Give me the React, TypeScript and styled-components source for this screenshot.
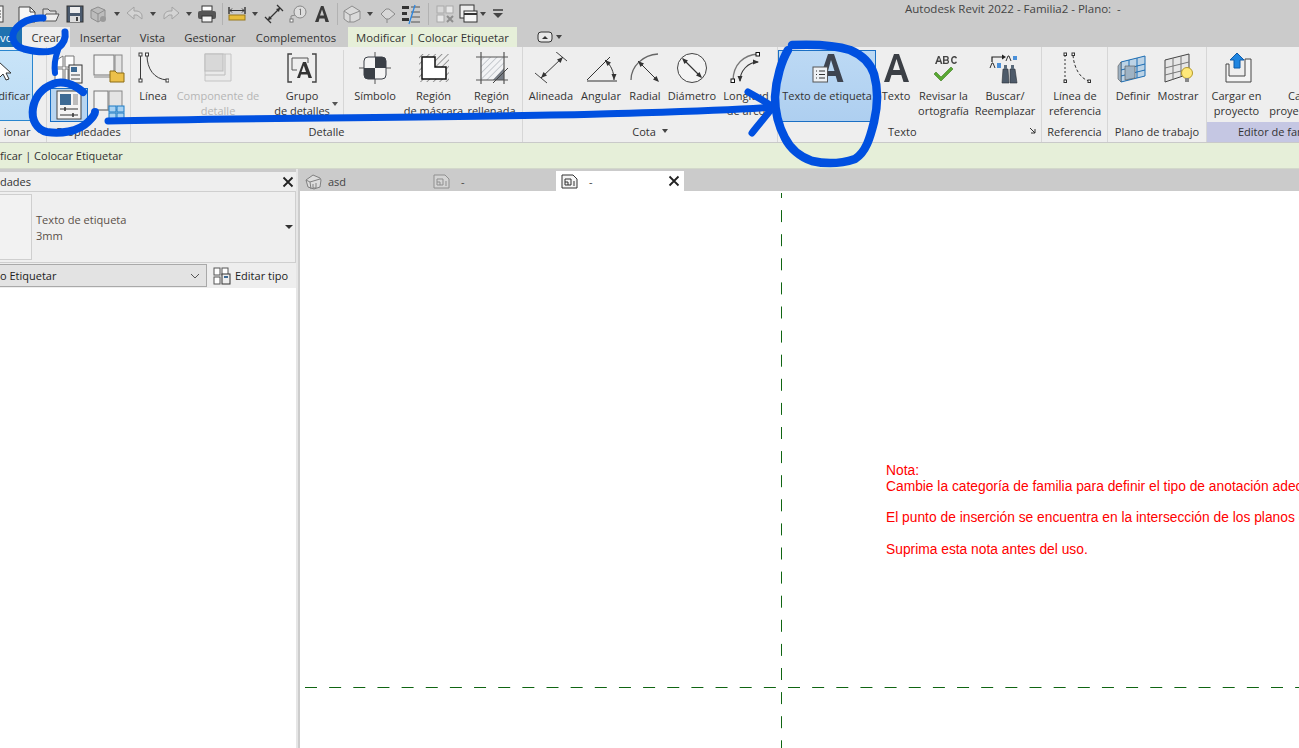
import React from 'react';
import styled, { createGlobalStyle } from 'styled-components';

const GlobalStyle = createGlobalStyle`
  html, body { margin: 0; padding: 0; height: 100%; overflow: hidden; background: #cbcbcb; }
  #root { height: 100%; }
  * { box-sizing: border-box; }
`;

const uiFont = `'Open Sans', 'Noto Sans', 'Liberation Sans', sans-serif`;

const Page = styled.div`
  position: relative;
  width: 1299px;
  height: 748px;
  overflow: hidden;
  font-family: ${uiFont};
  font-size: 11px;
  color: #333;
  display: flex;
  flex-direction: column;
`;

/* title bar */
const TitleBar = styled.div`
  height: 27px;
  flex: none;
  display: flex;
  align-items: center;
  background: #cbcbcb;
`;
const QuickBar = styled.div`
  display: flex;
  align-items: center;
  margin-left: -25px;
  width: 930px;
`;
const QuickCell = styled.span<{ $w: number }>`
  width: ${p => p.$w}px;
  height: 24px;
  flex: none;
  display: flex;
  align-items: center;
  justify-content: center;
`;
const QuickSep = styled.span`
  width: 1px;
  height: 22px;
  background: #b2b2b2;
`;
const Caret = styled.span`
  width: 0;
  height: 0;
  border-left: 3.5px solid transparent;
  border-right: 3.5px solid transparent;
  border-top: 4px solid #444;
`;
const TitleText = styled.div`
  font-size: 11.5px;
  color: #444;
  white-space: pre;
  margin-top: -10px;
`;

/* tabs */
const TabRow = styled.div`
  height: 20px;
  flex: none;
  display: flex;
  background: #cbcbcb;
`;
const Tab = styled.div<{ $w: number; $kind?: 'file' | 'open' | 'context' }>`
  width: ${p => p.$w}px;
  flex: none;
  display: flex;
  align-items: center;
  justify-content: ${p => (p.$kind === 'file' ? 'flex-start' : 'center')};
  white-space: nowrap;
  font-size: 11.3px;
  color: ${p => (p.$kind === 'file' ? '#fff' : '#333')};
  background: ${p =>
    p.$kind === 'file' ? '#1f72b0' : p.$kind === 'open' ? '#eeeeee' : p.$kind === 'context' ? '#e6efd9' : 'transparent'};
`;
const TabGap = styled.div`
  width: 2px;
  flex: none;
`;
const PanelToggle = styled.div`
  margin-left: 20px;
  display: flex;
  align-items: center;
  gap: 3px;
`;

/* ribbon */
const Ribbon = styled.div`
  height: 96px;
  flex: none;
  display: flex;
  background: #eeeeee;
  border-bottom: 1px solid #c9c9c9;
`;
const Panel = styled.section<{ $w: number }>`
  width: ${p => p.$w}px;
  flex: none;
  display: flex;
  flex-direction: column;
  border-right: 1px solid #d6d6d6;
`;
const PanelBody = styled.div<{ $pad?: number }>`
  height: 75px;
  display: flex;
  padding-left: ${p => p.$pad ?? 0}px;
`;
const PanelTitle = styled.div<{ $accent?: boolean; $indent?: number }>`
  height: 20px;
  display: flex;
  align-items: center;
  justify-content: ${p => (p.$indent !== undefined ? 'flex-start' : 'center')};
  gap: 6px;
  white-space: nowrap;
  font-size: 11px;
  padding-left: ${p => p.$indent ?? 0}px;
  padding-bottom: 2px;
  background: ${p => (p.$accent ? '#c5c7e3' : 'transparent')};
`;
const CornerArrow = styled.svg`
  margin-left: auto;
  margin-right: 4px;
`;
const ToolButton = styled.div<{ $w: number; $selected?: boolean; $disabled?: boolean }>`
  position: relative;
  width: ${p => p.$w}px;
  flex: none;
  display: flex;
  flex-direction: column;
  align-items: center;
  padding-top: ${p => (p.$selected ? 0 : 5)}px;
  margin-top: ${p => (p.$selected ? 3 : 0)}px;
  height: ${p => (p.$selected ? 72 : 75)}px;
  border: ${p => (p.$selected ? '1px solid #1a6fc4' : 'none')};
  background: ${p => (p.$selected ? 'linear-gradient(#bcd9f4, #aecff0)' : 'transparent')};
  color: ${p => (p.$disabled ? '#b5b5b5' : '#333')};
`;
const ToolLabel = styled.div`
  margin-top: 4px;
  font-size: 11px;
  line-height: 15px;
  text-align: center;
  white-space: pre;
`;
const SplitCaret = styled(Caret)`
  position: absolute;
  right: 5px;
  top: 55px;
  border-top-color: #555;
`;
const ModifyButton = styled.div`
  width: 57px;
  height: 71px;
  margin-left: -24px;
  margin-top: 3px;
  flex: none;
  display: flex;
  flex-direction: column;
  align-items: flex-end;
  border: 1px solid #2a86cf;
  background: linear-gradient(#c9e4f8, #bcdcf5);
  padding: 8px 2px 0 0;
`;
const ModifyArrow = styled.span`
  display: flex;
  margin-right: 9px;
`;
const ModifyLabel = styled(ToolLabel)`
  margin-top: 5px;
`;
const PropsGrid = styled.div`
  display: grid;
  grid-template-columns: 40px 40px;
  grid-template-rows: 37px 35px;
  padding: 3px 0 0 2px;
  align-items: center;
  justify-items: center;
`;
const PropsCell = styled.div<{ $selected?: boolean }>`
  width: ${p => (p.$selected ? 38 : 32)}px;
  height: ${p => (p.$selected ? 34 : 32)}px;
  display: flex;
  align-items: center;
  justify-content: center;
  border: ${p => (p.$selected ? '1px solid #1a6fc4' : 'none')};
  background: ${p => (p.$selected ? '#b7d5f1' : 'transparent')};
`;
const InnerRule = styled.div`
  width: 1px;
  height: 68px;
  flex: none;
  margin-top: 3px;
  background: #d6d6d6;
`;

/* options bar */
const OptionsBar = styled.div`
  height: 26px;
  flex: none;
  background: #e6efd9;
  border-bottom: 1px solid #d3d8cb;
  display: flex;
  align-items: center;
  font-size: 11px;
`;

/* workspace */
const Workspace = styled.div`
  flex: 1;
  min-height: 0;
  display: flex;
`;
const Properties = styled.aside`
  width: 296px;
  flex: none;
  display: flex;
  flex-direction: column;
  margin-top: 3px;
  background: #fff;
`;
const PropsHeader = styled.div`
  height: 19px;
  flex: none;
  background: #eeeeee;
  display: flex;
  align-items: center;
  justify-content: space-between;
  padding-right: 2px;
  font-size: 11px;
`;
const TypeSelector = styled.div`
  height: 72px;
  flex: none;
  display: flex;
  align-items: center;
  background: #efefef;
  border: 1px solid #cfcfcf;
  border-left: none;
`;
const TypePreview = styled.div`
  width: 32px;
  height: 66px;
  flex: none;
  background: #f2f2f2;
  border: 1px solid #cfcfcf;
  border-left: none;
`;
const TypeText = styled.div`
  flex: 1;
  margin-left: 4px;
  padding-top: 2px;
  line-height: 16px;
  font-size: 11.1px;
  color: #5a5048;
`;
const TypeArrow = styled(Caret)`
  margin-right: 2px;
  border-top-color: #333;
  border-left-width: 4px;
  border-right-width: 4px;
`;
const TypeRow = styled.div`
  height: 25px;
  flex: none;
  background: #eeeeee;
  display: flex;
  align-items: center;
`;
const Combo = styled.div`
  width: 207px;
  height: 23px;
  flex: none;
  display: flex;
  align-items: center;
  justify-content: space-between;
  padding-right: 6px;
  background: #e3e3e3;
  border: 1px solid #a9a9a9;
  border-left: none;
  font-size: 11px;
  color: #222;
`;
const EditType = styled.div`
  margin-left: 6px;
  display: flex;
  align-items: center;
  gap: 4px;
  font-size: 11px;
  color: #222;
`;
const Splitter = styled.div`
  width: 4px;
  flex: none;
  background: linear-gradient(90deg, #e6e6e6 50%, #cdcdcd 50%);
`;
const DocArea = styled.div`
  flex: 1;
  min-width: 0;
  display: flex;
  flex-direction: column;
`;
const DocTabs = styled.div`
  height: 22px;
  flex: none;
  display: flex;
  align-items: flex-end;
  background: #cbcbcb;
`;
const DocTab = styled.div<{ $w: number; $gap: number; $active?: boolean }>`
  width: ${p => p.$w}px;
  height: 20px;
  flex: none;
  display: flex;
  align-items: center;
  gap: ${p => p.$gap}px;
  padding-left: 5px;
  padding-right: 4px;
  font-size: 11px;
  color: #444;
  background: ${p => (p.$active ? '#fff' : 'transparent')};
`;
const DocClose = styled.span`
  margin-left: auto;
  display: flex;
`;
const Canvas = styled.main`
  flex: 1;
  position: relative;
  background: #fff;
  overflow: hidden;
`;
const RefLines = styled.svg`
  position: absolute;
  inset: 0;
`;
const Note = styled.div`
  position: absolute;
  left: 586px;
  top: 272px;
  font-family: 'Liberation Sans', Arial, sans-serif;
  font-size: 13.8px;
  line-height: 15.8px;
  color: #ff0000;
  white-space: nowrap;
`;
const Annotation = styled.svg`
  position: absolute;
  left: 0;
  top: 0;
  pointer-events: none;
`;

type S = { s?: number };
const Ic = ({ s = 32, vb = 32, children }: S & { vb?: number; children: React.ReactNode }) => (
  <svg width={s} height={s} viewBox={`0 0 ${vb} ${vb}`} fill="none">
    {children}
  </svg>
);

/* quick access icons */
const pale = '#a3a3a3';
const QList = () => <Ic s={20} vb={20}><rect x="2" y="2" width="16" height="16" fill="#f4f4f4" stroke="#444" /><path d="M6 7h10M6 10h10M6 13h10" stroke="#444" /></Ic>;
const QNew = () => <Ic s={20} vb={20}><path d="M2 3h11l5 5v10H2z" fill="#f6f6f6" stroke="#444" /><path d="M13 3v5h5" stroke="#444" /></Ic>;
const QOpen = () => <Ic s={20} vb={20}><path d="M2 17V5h5l2 2h6v3" fill="#ddd" stroke="#555" /><path d="M2 17l3-7h13l-3 7z" fill="#eee" stroke="#555" /></Ic>;
const QSave = () => <Ic s={20} vb={20}><rect x="2" y="2" width="16" height="16" fill="#4a5a6e" stroke="#333" /><rect x="5" y="3" width="10" height="6" fill="#eee" /><rect x="5" y="12" width="10" height="6" fill="#ddd" /><rect x="11" y="13" width="2" height="4" fill="#444" /></Ic>;
const QBox = () => <Ic s={20} vb={20}><path d="M3 6l7-3 7 3v8l-7 4-7-4z" fill="#bcbcbc" stroke="#8d8d8d" /><path d="M3 6l7 4 7-4M10 10v8" stroke="#8d8d8d" /><circle cx="15" cy="15" r="3" fill="#9a9a9a" /></Ic>;
const QUndo = () => <Ic s={20} vb={20}><path d="M9 3L2 9l7 6v-4h3l5 4v-3c0-3-3-5-6-5H9z" fill="#d4d4d4" stroke={pale} /></Ic>;
const QRedo = () => <Ic s={20} vb={20}><path d="M11 3l7 6-7 6v-4H8l-5 4v-3c0-3 3-5 6-5h2z" fill="#d4d4d4" stroke={pale} /></Ic>;
const QPrint = () => <Ic s={20} vb={20}><rect x="5" y="2" width="10" height="5" fill="#fff" stroke="#333" /><rect x="1" y="7" width="18" height="8" rx="2" fill="#555" /><rect x="5" y="12" width="10" height="6" fill="#f4f4f4" stroke="#333" /></Ic>;
const QMeasure = () => <Ic s={20} vb={20}><path d="M2 3v7M18 3v7" stroke="#333" strokeWidth="1.4" /><path d="M3 6.500h14M5 4.500l-2 2 2 2M15 4.500l2 2-2 2" stroke="#333" /><rect x="2" y="11" width="16" height="5" fill="#e8bd3a" stroke="#9a7a1c" /></Ic>;
const QAlign = () => <Ic s={20} vb={20}><path d="M4 16L16 4M1 13l6 6M13 1l6 6" stroke="#333" strokeWidth="1.3" /><path d="M4 16l1-4 3 3zM16 4l-1 4-3-3z" fill="#333" /></Ic>;
const QTag = () => <Ic s={20} vb={20}><circle cx="12" cy="8" r="6" fill="#ddd" stroke="#888" /><path d="M3 17v-5l4-1" stroke="#888" /><rect x="2" y="15" width="3" height="3" fill="#fff" stroke="#777" /><path d="M11.500 5.500l1-.5v6" stroke="#777" /></Ic>;
const QTextA = () => <Ic s={20} vb={20}><path fillRule="evenodd" d="M3 18L9 2h2.500L17 18h-3.500l-1-3.500h-5L6.500 18zM8 11.500h4L10 5.500z" fill="#3a3a3a" /></Ic>;
const QHouse = () => <Ic s={20} vb={20}><path d="M2 7l8-5 8 5v8l-6 3H6l-4-3z" fill="#dadada" stroke="#8d8d8d" /><path d="M2 7l6 4v7M8 11l10-4" stroke="#8d8d8d" /></Ic>;
const QPin = () => <Ic s={20} vb={20}><path d="M3 10l5-5h3l6 5-6 5H8z" fill="#d8d8d8" stroke="#8a8a8a" /><path d="M9 15v4" stroke="#8a8a8a" /></Ic>;
const QLines = () => <Ic s={22} vb={22}><path d="M11 4h9M11 9h9M11 14h9M11 19h9" stroke="#555" /><rect x="2" y="3" width="7" height="3" fill="#333" /><rect x="2" y="9" width="5" height="3" fill="#333" /><rect x="2" y="15" width="7" height="3" fill="#333" /><path d="M15 2L9 21" stroke="#2b86e0" strokeWidth="1.3" /></Ic>;
const QGray = () => <Ic s={20} vb={20}><rect x="2" y="2" width="7" height="7" fill="#d8d8d8" stroke="#aaa" /><rect x="11" y="2" width="7" height="7" fill="#e8e8e8" stroke="#aaa" /><rect x="2" y="11" width="7" height="7" fill="#e8e8e8" stroke="#aaa" /><path d="M12 12l6 6M18 12l-6 6" stroke="#8d8d8d" strokeWidth="2" /></Ic>;
const QSwitch = () => <Ic s={20} vb={20}><rect x="2" y="1" width="14" height="13" fill="#ededed" stroke="#333" /><rect x="6" y="7" width="13" height="11" fill="#f6f6f6" stroke="#333" /><path d="M6 10h13" stroke="#333" strokeWidth="2" /></Ic>;
const QCustomize = () => <Ic s={14} vb={14}><path d="M2 3h10" stroke="#444" strokeWidth="1.600" /><path d="M2 6h10l-5 5z" fill="#444" /></Ic>;

/* ribbon icons */
const dk = '#3a3a3a';
const LineIcon = () => <Ic><path d="M3.500 3v25" stroke={dk} /><rect x="2" y="1" width="3" height="3" fill="#fff" stroke={dk} /><rect x="2" y="27" width="3" height="3" fill="#fff" stroke={dk} /><path d="M10 3c0 14 7 24 20 25" stroke={dk} /><rect x="8.500" y="1" width="3" height="3" fill="#fff" stroke={dk} /><rect x="29" y="27" width="3" height="3" fill="#fff" stroke={dk} /></Ic>;
const ComponentIcon = () => <Ic><path d="M3 2h26v27H3z" fill="#eaeaea" stroke="#c4c4c4" /><rect x="3" y="2" width="18" height="17" fill="#d8d8d8" stroke="#bcbcbc" /><path d="M23 2v21H3" stroke="#bcbcbc" /></Ic>;
const GroupIcon = () => <Ic><path d="M6 2H2v28h4M26 2h4v28h-4" stroke="#444" strokeWidth="1.400" /><path d="M6 6h16v5M6 6v12h5" stroke="#555" /><path fillRule="evenodd" d="M11 26l6-16h3l6 16h-3.500l-1-3.500h-6.500L14 26zM15.500 20h4.500l-2.200-6.500z" fill="#333" /></Ic>;
const SymbolIcon = () => <Ic><path d="M16 0v32M0 16h32" stroke="#555" /><rect x="5" y="5" width="22" height="22" rx="4" fill="#fff" /><path d="M16 5h7a4 4 0 014 4v7H16zM16 16H5v7a4 4 0 004 4h7z" fill="#3a3f46" /><path d="M16 5H9a4 4 0 00-4 4v7h11zM16 16h11v7a4 4 0 01-4 4h-7z" fill="#f4f4f4" /><rect x="5" y="5" width="22" height="22" rx="4" stroke="#3a3f46" /></Ic>;
const Hatch = ({ id, color }: { id: string; color: string }) => (
  <defs>
    <pattern id={id} width="4.500" height="4.500" patternUnits="userSpaceOnUse" patternTransform="rotate(45)">
      <path d="M0 0v4.500" stroke={color} strokeWidth="1" />
    </pattern>
  </defs>
);
const MaskIcon = () => <Ic><Hatch id="mask-hatch" color="#444" /><rect x="1" y="2" width="30" height="28" fill="url(#mask-hatch)" /><path d="M4 5h13v10h11v12H4z" fill="#fff" stroke="#111" strokeWidth="1.500" /></Ic>;
const FilledIcon = () => <Ic><Hatch id="fill-hatch" color="#9aa0a8" /><rect x="5" y="5" width="23" height="23" fill="#f2f3f5" /><rect x="5" y="5" width="23" height="23" fill="url(#fill-hatch)" /><path d="M28 16v12H17z" fill="#767c85" /><path d="M0 5h32M0 28h32M5 0v32M28 0v32" stroke="#555" strokeWidth="1.200" /><path d="M17 31l15-15" stroke="#444" /></Ic>;
const ArrowHead = ({ x, y, r }: { x: number; y: number; r: number }) => <path d="M0 0l-6-2.500v5z" transform={`translate(${x} ${y}) rotate(${r})`} fill="#333" />;
const AlignedIcon = () => <Ic><path d="M2 22l12 10M22 0l12 10" stroke="#444" transform="translate(-2 -1)" /><path d="M6 26L28 5" stroke="#333" /><ArrowHead x={6} y={26} r={135} /><ArrowHead x={28} y={5} r={-45} /></Ic>;
const AngularIcon = () => <Ic><path d="M2 28L25 5" stroke="#333" /><path d="M2 29h30" stroke="#333" /><path d="M20 8c6 5 9 12 9 20" stroke="#333" /><ArrowHead x={20} y={8} r={-135} /><ArrowHead x={29} y={28} r={90} /></Ic>;
const RadialIcon = () => <Ic><path d="M2 28C2 14 14 3 29 2" stroke="#666" strokeWidth="1.300" /><path d="M9 9l20 20" stroke="#333" /><ArrowHead x={9} y={9} r={-135} /><ArrowHead x={30} y={30} r={45} /></Ic>;
const DiameterIcon = () => <Ic><circle cx="16" cy="16" r="14.500" fill="#f4f4f4" stroke="#444" /><path d="M7 7l18 18" stroke="#333" strokeWidth="1.100" /><ArrowHead x={6} y={6} r={-135} /><ArrowHead x={26} y={26} r={45} /></Ic>;
const ArcIcon = () => <Ic><path d="M3 29C3 12 14 3 28 2" stroke="#777" strokeWidth="1.300" /><path d="M10 29c0-10 8-19 18-19" stroke="#333" strokeWidth="1.100" /><ArrowHead x={10} y={30} r={90} /><ArrowHead x={29} y={10} r={0} /><rect x="1" y="27" width="3.500" height="3.500" fill="#fff" stroke="#111" /><rect x="26" y="0.500" width="3.500" height="3.500" fill="#fff" stroke="#111" /></Ic>;
const LabelTextIcon = () => <Ic s={33} vb={33}><path fillRule="evenodd" d="M7.500 31L17 3h6l9.500 28h-6l-1.800-6H15.500l-2 6zM17 20h6.500L20 9z" fill="#3e4450" /><rect x="2" y="16" width="14.500" height="15" fill="#eef1f4" stroke="#555" /><path d="M5 20h1M8 20h6M5 23.500h1M8 23.500h6M5 27h1M8 27h6" stroke="#333" /></Ic>;
const BigA = () => <Ic><path fillRule="evenodd" d="M4 30L14 2h5l10 28h-5.500l-2.200-7H11.500l-2.200 7zM13 18h7L16.500 7z" fill="#3b3f45" /></Ic>;
const SpellIcon = () => (
  <Ic>
    <path fillRule="evenodd" d="M7 12l3-8h1.500l3 8h-1.700l-.6-2H9.300l-.6 2zM10 8.500h2L11 5.500z" fill="#444" />
    <path fillRule="evenodd" d="M15 4h4c2 0 2.500 3.500.8 4 2 .5 1.500 4-.8 4h-4zM16.500 5.300v2.200h2c1.200 0 1.200-2.200 0-2.200zM16.500 8.700v2h2.300c1.300 0 1.300-2 0-2z" fill="#444" />
    <path d="M29 6c-1-3-6-2.500-6 2s5 5 6 2l-1.200-.5c-.8 1.500-3.300 1.500-3.300-1.500s2.500-3 3.300-1.500z" fill="#444" />
    <path d="M8 20l5 5 10-10 2 2-12 12-7-7z" fill="#58a832" stroke="#3a7a1c" strokeWidth=".6" />
  </Ic>
);
const ReplaceIcon = () => (
  <Ic>
    <path d="M3 10V5h11" stroke="#222" strokeWidth="1.200" /><path d="M13 2.500l4 2.500-4 2.500z" fill="#222" />
    <path d="M17 9l2-5h1l2 5" stroke="#333" /><path d="M24 4h4v4h-4z" fill="#4a90d9" />
    <path d="M1 16l2-5h1l2 5" stroke="#333" /><path d="M8 11h4v5H8z" fill="#4a90d9" />
    <path d="M14 17h5l1 14h-7zM21 17h5l2 14h-7z" fill="#4e5b6a" stroke="#2a2f36" strokeWidth=".6" /><rect x="15" y="13" width="3" height="4" fill="#5a6a7a" /><rect x="22" y="13" width="3" height="4" fill="#5a6a7a" />
  </Ic>
);
const RefLineIcon = () => <Ic><path d="M6 3v26" stroke="#333" strokeDasharray="2 2" /><rect x="5" y="1" width="2.500" height="2.500" fill="#fff" stroke="#333" /><rect x="5" y="28" width="2.500" height="2.500" fill="#fff" stroke="#333" /><path d="M14 3c1 14 8 24 16 26" stroke="#333" strokeDasharray="3 2" /><rect x="13" y="1" width="2.500" height="2.500" fill="#fff" stroke="#333" /><rect x="29" y="28" width="2.500" height="2.500" fill="#fff" stroke="#333" /></Ic>;
const DefineIcon = () => <Ic><path d="M4 10L28 4v20L4 30z" fill="#bcd3e6" stroke="#1c6db3" /><path d="M12 8v20M20 6v20M4 18l24-6M4 24l24-6" stroke="#1c6db3" /><path d="M1 14l3-4v20l-3-3zM8 14h10v12l-10 2z" fill="#9fb3c4" stroke="#555" strokeWidth=".6" /></Ic>;
const ShowIcon = () => <Ic><path d="M3 8L27 2v20L3 30z" fill="#e6e6e6" stroke="#444" /><path d="M11 6v22M19 4v20M3 16l24-6M3 23l24-6" stroke="#777" /><circle cx="25" cy="21" r="5.500" fill="#ffe97a" stroke="#b49a2a" /><rect x="23" y="26" width="4" height="4" fill="#888" /></Ic>;
const LoadIcon = () => <Ic><path d="M5 12h3v12h16V7h6v23H5z" fill="#f4f4f4" stroke="#444" /><path d="M16 1l7 7h-4v8h-6V8H9z" fill="#1f85e0" stroke="#0f5aa8" /></Ic>;
const ProjIcon = () => <Ic><path d="M5 4h8v10H5zM5 16h8v14H5zM15 12h12v18H15z" fill="#f0f0f0" stroke="#444" /></Ic>;
const Arrow3D = () => <Ic s={24} vb={24}><path d="M2 3v16l4-4 3 6 3-1-3-6h5z" fill="#fff" stroke="#333" /></Ic>;
const CubeDoc = () => <Ic><path d="M2 8l8-5v11H2zM12 3h9v11h-9zM2 16h8v12H2zM12 16h3v12h-3z" fill="#fff" stroke="#777" /><rect x="16" y="12" width="13" height="18" fill="#f4f4f4" stroke="#333" /><rect x="18" y="14" width="6" height="5" fill="#3d6a94" /><path d="M18 22h9M18 26h9" stroke="#444" /></Ic>;
const TypeFolder = () => <Ic><rect x="1" y="2" width="20" height="20" fill="#f2f2f2" stroke="#777" /><rect x="22" y="2" width="7" height="20" fill="#e4e4e4" stroke="#888" /><path d="M1 24h20" stroke="#888" /><path d="M17 18h5l2 2h7v9H17z" fill="#ecc04a" stroke="#8c6d14" /></Ic>;
const PropsIcon = () => <Ic><rect x="4" y="2" width="24" height="28" fill="#f4f4f4" stroke="#444" /><rect x="7" y="5" width="11" height="11" fill="#3d6a94" /><rect x="20" y="5" width="5" height="11" fill="#bcbcbc" /><path d="M7 20h18M7 26h18" stroke="#333" /><path d="M12 18v4M20 24v4" stroke="#333" strokeWidth="1.500" /></Ic>;
const TypeGrid = () => <Ic><rect x="1" y="2" width="14" height="19" fill="#f2f2f2" stroke="#777" /><rect x="16" y="2" width="13" height="19" fill="#e4e4e4" stroke="#888" /><path d="M16 21h-15" stroke="#888" /><rect x="16" y="17" width="7" height="6" fill="#a9d2f2" stroke="#1a7bc6" /><rect x="24" y="17" width="7" height="6" fill="#a9d2f2" stroke="#1a7bc6" /><rect x="16" y="24" width="7" height="6" fill="#a9d2f2" stroke="#1a7bc6" /><rect x="24" y="24" width="7" height="6" fill="#a9d2f2" stroke="#1a7bc6" /></Ic>;
const EditTypeIcon = () => <Ic s={18} vb={18}><rect x="1" y="1" width="6" height="7" fill="#fff" stroke="#555" /><rect x="9" y="1" width="6" height="7" fill="#fff" stroke="#555" /><rect x="1" y="10" width="6" height="7" fill="#fff" stroke="#555" /><rect x="9" y="7" width="8" height="10" fill="#eee" stroke="#333" /><rect x="11" y="9" width="4" height="2" fill="#3d6a94" /></Ic>;
const CloseX = () => <Ic s={12} vb={12}><path d="M1.500 1.500l9 9M10.500 1.500l-9 9" stroke="#222" strokeWidth="1.800" /></Ic>;
const ViewIcon = ({ faded }: { faded?: boolean }) => (
  <Ic s={17} vb={17}>
    <path d="M1 2h11l4 4v9H1z" fill={faded ? '#d4d4d4' : '#f4f4f4'} stroke={faded ? '#8f8f8f' : '#333'} />
    <path d="M4 12V6h6v6zM4 9h3v3" stroke={faded ? '#8f8f8f' : '#333'} />
    <path d="M13 8v5" stroke={faded ? '#8f8f8f' : '#333'} />
  </Ic>
);
const HouseTab = () => <Ic s={17} vb={17}><path d="M1 7l7-5 7 3 1 2-1 7-6 2-6-2z" fill="#dcdcdc" stroke="#808080" /><path d="M1 7l4 2 1 7M5 9l10-3M8 11v4h3v-5" stroke="#808080" /></Ic>;
const ToggleIcon = () => <Ic s={16} vb={16}><rect x="1" y="3" width="14" height="10" rx="3" fill="#e8e8e8" stroke="#333" /><path d="M5 10l3-3 3 3z" fill="#333" /></Ic>;

const quickItems: { w: number; el: React.ReactNode }[] = [
  { w: 40, el: <QList /> },
  { w: 24, el: <QNew /> },
  { w: 23, el: <QOpen /> },
  { w: 25, el: <QSave /> },
  { w: 22, el: <QBox /> },
  { w: 16, el: <Caret /> },
  { w: 20, el: <QUndo /> },
  { w: 15, el: <Caret /> },
  { w: 21, el: <QRedo /> },
  { w: 16, el: <Caret /> },
  { w: 20, el: <QPrint /> },
  { w: 10, el: <QuickSep /> },
  { w: 20, el: <QMeasure /> },
  { w: 16, el: <Caret /> },
  { w: 21, el: <QAlign /> },
  { w: 27, el: <QTag /> },
  { w: 22, el: <QTextA /> },
  { w: 8, el: <QuickSep /> },
  { w: 22, el: <QHouse /> },
  { w: 14, el: <Caret /> },
  { w: 22, el: <QPin /> },
  { w: 24, el: <QLines /> },
  { w: 10, el: <QuickSep /> },
  { w: 24, el: <QGray /> },
  { w: 22, el: <QSwitch /> },
  { w: 8, el: <Caret /> },
  { w: 22, el: <QCustomize /> },
];

const Tool = ({ w, icon, label, disabled, selected, split }: { w: number; icon: React.ReactNode; label: string; disabled?: boolean; selected?: boolean; split?: boolean }) => (
  <ToolButton $w={w} $disabled={disabled} $selected={selected}>
    {icon}
    <ToolLabel>{label}</ToolLabel>
    {split && <SplitCaret />}
  </ToolButton>
);

export default function App() {
  return (
    <Page>
      <GlobalStyle />
      <TitleBar>
        <QuickBar>
          {quickItems.map((item, i) => (
            <QuickCell key={i} $w={item.w}>{item.el}</QuickCell>
          ))}
        </QuickBar>
        <TitleText>{'Autodesk Revit 2022 - Familia2 - Plano:  -'}</TitleText>
      </TitleBar>

      <TabRow>
        <Tab $w={22} $kind="file">vo</Tab>
        <Tab $w={48} $kind="open">Crear</Tab>
        <Tab $w={61}>Insertar</Tab>
        <Tab $w={43}>Vista</Tab>
        <Tab $w={72}>Gestionar</Tab>
        <Tab $w={100}>Complementos</Tab>
        <TabGap />
        <Tab $w={169} $kind="context">Modificar | Colocar Etiquetar</Tab>
        <PanelToggle>
          <ToggleIcon />
          <Caret />
        </PanelToggle>
      </TabRow>

      <Ribbon>
        <Panel $w={47}>
          <PanelBody>
            <ModifyButton>
              <ModifyArrow><Arrow3D /></ModifyArrow>
              <ModifyLabel>Modificar</ModifyLabel>
            </ModifyButton>
          </PanelBody>
          <PanelTitle>ionar <Caret /></PanelTitle>
        </Panel>
        <Panel $w={84}>
          <PanelBody>
            <PropsGrid>
              <PropsCell><CubeDoc /></PropsCell>
              <PropsCell><TypeFolder /></PropsCell>
              <PropsCell $selected><PropsIcon /></PropsCell>
              <PropsCell><TypeGrid /></PropsCell>
            </PropsGrid>
          </PanelBody>
          <PanelTitle>Propiedades</PanelTitle>
        </Panel>
        <Panel $w={392}>
          <PanelBody>
            <Tool w={44} icon={<LineIcon />} label="Línea" />
            <Tool w={86} icon={<ComponentIcon />} label={'Componente de\ndetalle'} disabled />
            <Tool w={82} icon={<GroupIcon />} label={'Grupo\nde detalles'} split />
            <InnerRule />
            <Tool w={62} icon={<SymbolIcon />} label="Símbolo" />
            <Tool w={55} icon={<MaskIcon />} label={'Región\nde máscara'} />
            <Tool w={61} icon={<FilledIcon />} label={'Región\nrellenada'} />
          </PanelBody>
          <PanelTitle>Detalle</PanelTitle>
        </Panel>
        <Panel $w={255}>
          <PanelBody $pad={3}>
            <Tool w={50} icon={<AlignedIcon />} label="Alineada" />
            <Tool w={50} icon={<AngularIcon />} label="Angular" />
            <Tool w={38} icon={<RadialIcon />} label="Radial" />
            <Tool w={56} icon={<DiameterIcon />} label="Diámetro" />
            <Tool w={52} icon={<ArcIcon />} label={'Longitud\nde arco'} />
          </PanelBody>
          <PanelTitle>Cota <Caret /></PanelTitle>
        </Panel>
        <Panel $w={264}>
          <PanelBody>
            <Tool w={98} icon={<LabelTextIcon />} label="Texto de etiqueta" selected />
            <Tool w={40} icon={<BigA />} label="Texto" />
            <Tool w={55} icon={<SpellIcon />} label={'Revisar la\nortografía'} />
            <Tool w={68} icon={<ReplaceIcon />} label={'Buscar/\nReemplazar'} />
          </PanelBody>
          <PanelTitle $indent={110}>
            Texto
            <CornerArrow width="8" height="8" viewBox="0 0 8 8"><path d="M1 1l5 5M6 2v4H2" stroke="#333" fill="none" /></CornerArrow>
          </PanelTitle>
        </Panel>
        <Panel $w={66}>
          <PanelBody>
            <Tool w={66} icon={<RefLineIcon />} label={'Línea de\nreferencia'} />
          </PanelBody>
          <PanelTitle>Referencia</PanelTitle>
        </Panel>
        <Panel $w={99}>
          <PanelBody $pad={3}>
            <Tool w={44} icon={<DefineIcon />} label="Definir" />
            <Tool w={46} icon={<ShowIcon />} label="Mostrar" />
          </PanelBody>
          <PanelTitle>Plano de trabajo</PanelTitle>
        </Panel>
        <Panel $w={160}>
          <PanelBody>
            <Tool w={59} icon={<LoadIcon />} label={'Cargar en\nproyecto'} />
            <Tool w={94} icon={<ProjIcon />} label={'Cargar en\nproyecto y cerrar'} />
          </PanelBody>
          <PanelTitle $accent $indent={31}>Editor de familia</PanelTitle>
        </Panel>
      </Ribbon>

      <OptionsBar>ficar | Colocar Etiquetar</OptionsBar>

      <Workspace>
        <Properties>
          <PropsHeader>
            dades
            <CloseX />
          </PropsHeader>
          <TypeSelector>
            <TypePreview />
            <TypeText>Texto de etiqueta<br />3mm</TypeText>
            <TypeArrow />
          </TypeSelector>
          <TypeRow>
            <Combo>
              o Etiquetar
              <svg width="10" height="6" viewBox="0 0 10 6"><path d="M1 1l4 4 4-4" stroke="#555" fill="none" /></svg>
            </Combo>
            <EditType>
              <EditTypeIcon />
              Editar tipo
            </EditType>
          </TypeRow>
        </Properties>
        <Splitter />
        <DocArea>
          <DocTabs>
            <DocTab $w={128} $gap={6}><HouseTab /> asd</DocTab>
            <DocTab $w={128} $gap={11}><ViewIcon faded /> -</DocTab>
            <DocTab $w={128} $gap={11} $active>
              <ViewIcon /> -
              <DocClose><CloseX /></DocClose>
            </DocTab>
          </DocTabs>
          <Canvas>
            <RefLines width="999" height="557">
              <line x1="5" y1="496.500" x2="999" y2="496.500" stroke="#0f6512" strokeDasharray="12 12.150" />
              <line x1="481.500" y1="2" x2="481.500" y2="557" stroke="#0f6512" strokeDasharray="12 12.100" strokeDashoffset="7" />
            </RefLines>
            <Note>
              Nota:<br />
              Cambie la categoría de familia para definir el tipo de anotación adecuado.<br />
              <br />
              El punto de inserción se encuentra en la intersección de los planos de referencia.<br />
              <br />
              Suprima esta nota antes del uso.
            </Note>
          </Canvas>
        </DocArea>
      </Workspace>

      <Annotation width="1299" height="748" fill="none" stroke="#0050e0" strokeWidth="7" strokeLinecap="round" strokeLinejoin="round">
        <path d="M43 18C30 17 20 23 15 30C10 38 14 46 24 49C36 52 50 54 58 48C63 44 66 38 65 32" />
        <path d="M58 50C55 58 54 66 55 73" strokeWidth="6" />
        <path d="M83 92C74 84 62 80 53 84C42 88 35 97 33 108C31 120 37 130 47 132C60 134 78 132 88 122C92 118 95 115 95 112" strokeWidth="8" />
        <path d="M108 121C250 118 500 117 600 114C660 112 720 111 773 107" />
        <path d="M748 92C757 97 766 102 773 107C767 115 758 125 752 133" />
        <path d="M792 45C815 44 835 45 850 50C862 55 870 62 874 74C878 88 878 105 874 122C870 138 866 152 855 159C840 164 825 164 812 161C800 157 790 148 785 138C778 125 775 112 775 97C776 78 782 60 788 50" strokeWidth="8.500" />
      </Annotation>
    </Page>
  );
}
